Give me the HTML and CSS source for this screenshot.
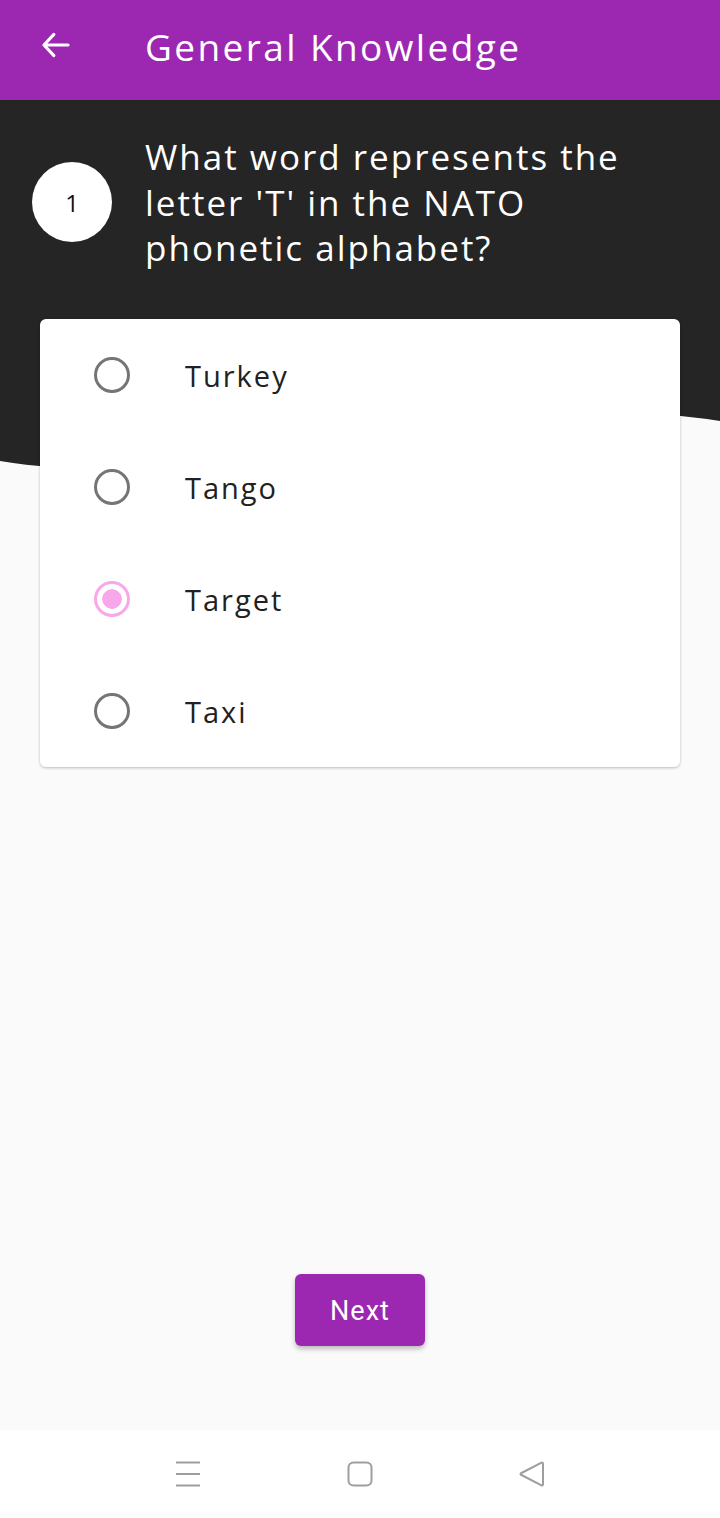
FILE: index.html
```html
<!DOCTYPE html>
<html>
<head>
<meta charset="utf-8">
<link rel="stylesheet" href="styles.css">
</head>
<body>
<div class="screen">
  <header class="appbar">
    <svg class="back" width="34" height="34" viewBox="0 0 24 24"><path d="M20.5 12H3.5M10.5 4.5L3.5 12l7 7.5" fill="none" stroke="#fff" stroke-width="2.2" stroke-linecap="round" stroke-linejoin="round"/></svg>
    <h1 class="title">General Knowledge</h1>
  </header>
  <main class="content">
    <div class="hero"></div>
    <section class="question">
      <div class="num">1</div>
      <p class="qtext">What word represents the letter 'T' in the NATO phonetic alphabet?</p>
    </section>
    <section class="card">
      <div class="option"><span class="radio"></span><span class="label">Turkey</span></div>
      <div class="option"><span class="radio"></span><span class="label">Tango</span></div>
      <div class="option"><span class="radio selected"></span><span class="label">Target</span></div>
      <div class="option"><span class="radio"></span><span class="label">Taxi</span></div>
    </section>
    <div class="spacer"></div>
    <div class="actions"><button class="next">Next</button></div>
  </main>
  <nav class="sysnav">
    <svg width="26" height="26" viewBox="0 0 26 26"><path d="M1 1.5h24M1 13h24M1 24.5h24" stroke="#9e9e9e" stroke-width="2" fill="none"/></svg>
    <svg width="26" height="26" viewBox="0 0 26 26"><rect x="1.5" y="1.5" width="23" height="23" rx="5" stroke="#9e9e9e" stroke-width="2" fill="none"/></svg>
    <svg width="26" height="26" viewBox="0 0 26 26"><path d="M24 2.5v21a1 1 0 0 1-1.5.8L2.5 14a1 1 0 0 1 0-2L22.5 1.7A1 1 0 0 1 24 2.5z" stroke="#9e9e9e" stroke-width="2" fill="none" stroke-linejoin="round"/></svg>
  </nav>
</div>
</body>
</html>
```
FILE: styles.css
```css
* { box-sizing: border-box; }
html, body { margin: 0; padding: 0; }
body { background: #fafafa; font-family: "Open Sans", "Noto Sans", sans-serif; }
.screen { width: 720px; height: 1518px; display: flex; flex-direction: column; overflow: hidden; }
.appbar {
  height: 100px; background: #9c27b0; display: flex; align-items: center;
  padding-left: 39px; flex-shrink: 0;
}
.back { margin-top: -10px; }
.title {
  margin: -8px 0 0 72px; color: #fff; font-weight: 400; font-size: 37px;
  letter-spacing: 2.4px;
}
.content { flex: 1; position: relative; display: flex; flex-direction: column; background: #fafafa; }
.hero {
  position: absolute; left: 0; top: 0; right: 0; height: 420px; background: #252525;
  clip-path: path('M0 0H720V321C480 282 240 400 0 361Z');
}
.question { position: relative; display: flex; align-items: center; padding: 34px 20px 0 32px; }
.num {
  width: 80px; height: 80px; border-radius: 50%; background: #fff; color: #111;
  display: flex; align-items: center; justify-content: center; font-size: 24px; flex-shrink: 0;
}
.qtext {
  margin: 0 0 0 33px; width: 490px; color: #fff; font-size: 35px; line-height: 45.5px; letter-spacing: 2px;
}
.card {
  position: relative; margin: 48px 40px 0; background: #fff; border-radius: 6px;
  box-shadow: 0 1px 3px rgba(0,0,0,0.25); padding: 0;
}
.option { height: 112px; display: flex; align-items: center; padding-left: 54px; }
.radio {
  width: 36px; height: 36px; border-radius: 50%; border: 3.5px solid #757575; flex-shrink: 0;
}
.radio.selected { border-color: #f8a8ea; background: radial-gradient(circle, #f8a8ea 0 9.5px, #fff 10px); }
.label { margin-left: 55px; font-size: 29px; color: #212121; letter-spacing: 2px; margin-top: 2px; }
.spacer { flex: 1; }
.actions { display: flex; justify-content: center; padding-bottom: 84px; }
.next {
  width: 130px; height: 72px; border: 0; border-radius: 6px; background: #9c27b0; color: #fff;
  font-family: Roboto, sans-serif; font-size: 27px; letter-spacing: 1px; padding-top: 3px;
  box-shadow: 0 3px 5px rgba(0,0,0,0.25);
}
.sysnav {
  height: 88px; background: #fff; display: flex; justify-content: space-between; align-items: center;
  padding: 0 175px; flex-shrink: 0;
}
```
